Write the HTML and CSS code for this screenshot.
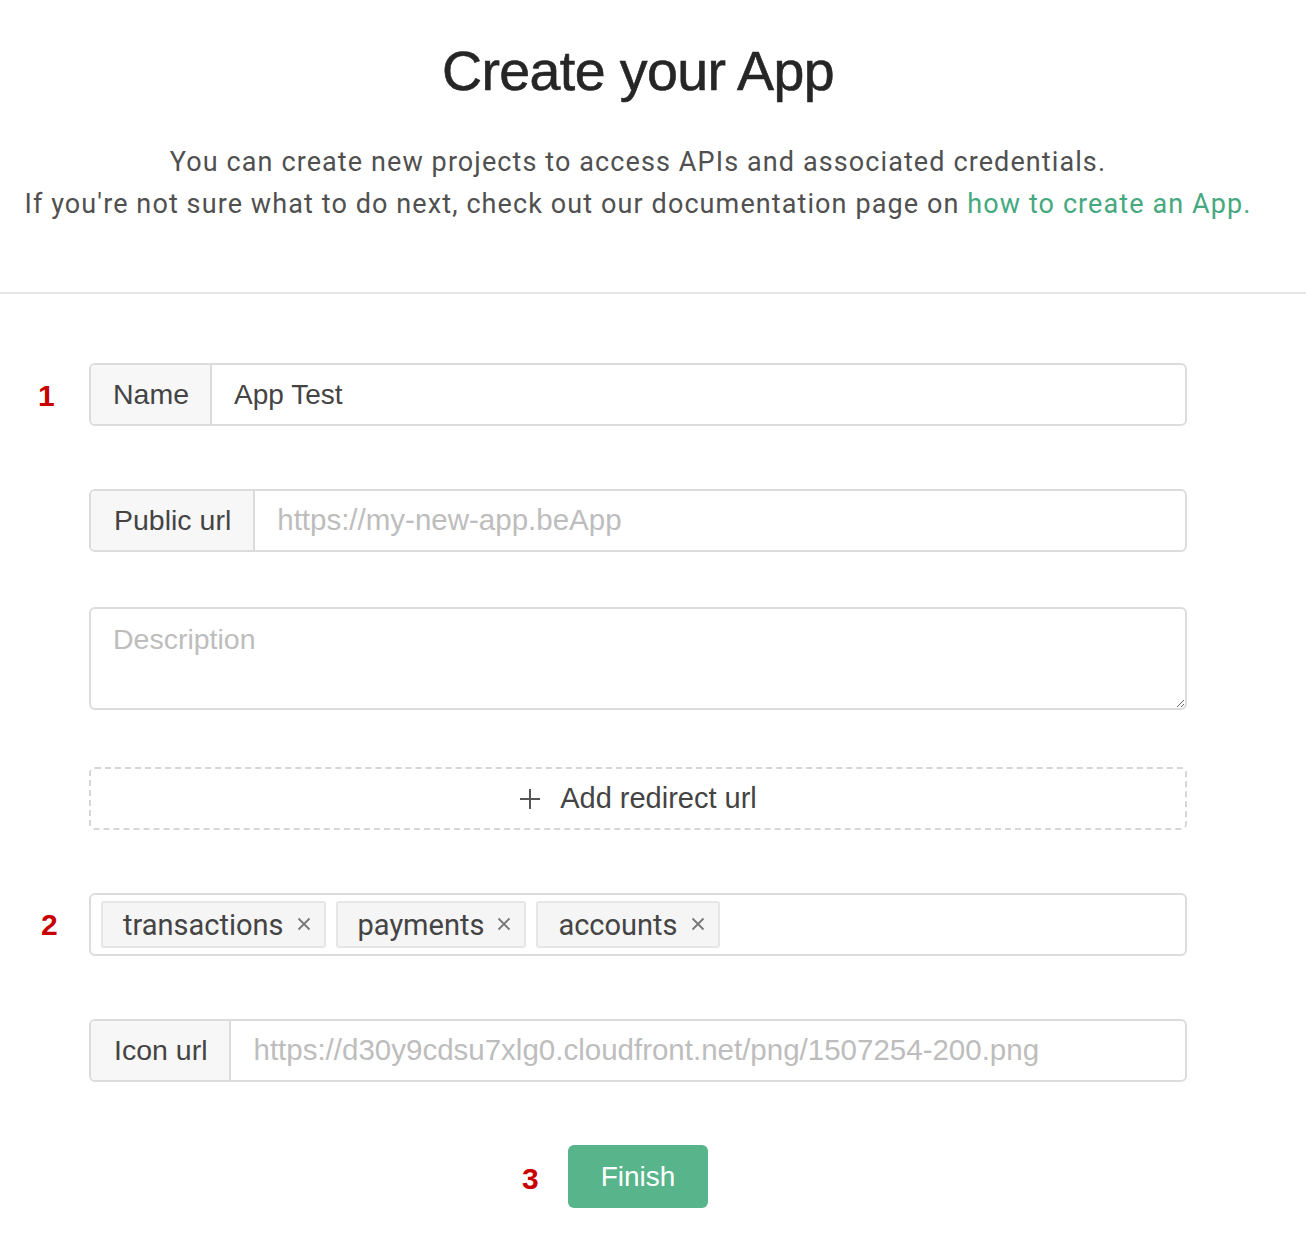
FILE: index.html
```html
<!DOCTYPE html>
<html lang="en">
<head>
<meta charset="utf-8">
<title>Create your App</title>
<link rel="stylesheet" href="styles.css">
</head>
<body>
<div class="page">
  <header class="intro">
    <h1 class="title">Create your App</h1>
    <p class="lead">You can create new projects to access APIs and associated credentials.<br>If you're not sure what to do next, check out our documentation page on <a class="link" href="#">how to create an App.</a></p>
  </header>
  <div class="divider"></div>
  <form class="form">
    <div class="row">
      <span class="step step-1">1</span>
      <div class="group">
        <span class="addon">Name</span>
        <input class="field" type="text" value="App Test">
      </div>
    </div>
    <div class="row">
      <div class="group">
        <span class="addon addon-wide">Public url</span>
        <input class="field" type="text" placeholder="https://my-new-app.beApp">
      </div>
    </div>
    <div class="row row-desc">
      <textarea class="area" placeholder="Description"></textarea>
    </div>
    <div class="row row-add">
      <button type="button" class="add">
        <svg class="plus" width="22" height="22" viewBox="0 0 22 22"><path d="M11 1v20M1 11h20" stroke="#555" stroke-width="2" fill="none"/></svg>
        <span>Add redirect url</span>
      </button>
    </div>
    <div class="row">
      <span class="step step-2">2</span>
      <div class="group tags">
        <span class="tag">transactions<svg class="x" width="14" height="14" viewBox="0 0 14 14"><path d="M1.5 1.5l11 11M12.5 1.5l-11 11" stroke="#777" stroke-width="1.8" fill="none"/></svg></span>
        <span class="tag">payments<svg class="x" width="14" height="14" viewBox="0 0 14 14"><path d="M1.5 1.5l11 11M12.5 1.5l-11 11" stroke="#777" stroke-width="1.8" fill="none"/></svg></span>
        <span class="tag">accounts<svg class="x" width="14" height="14" viewBox="0 0 14 14"><path d="M1.5 1.5l11 11M12.5 1.5l-11 11" stroke="#777" stroke-width="1.8" fill="none"/></svg></span>
      </div>
    </div>
    <div class="row">
      <div class="group">
        <span class="addon addon-wide">Icon url</span>
        <input class="field" type="text" placeholder="https://d30y9cdsu7xlg0.cloudfront.net/png/1507254-200.png">
      </div>
    </div>
    <div class="row row-submit">
      <div class="submit">
        <span class="step step-3">3</span>
        <button type="button" class="finish">Finish</button>
      </div>
    </div>
  </form>
</div>
</body>
</html>
```

FILE: styles.css
```css
* { box-sizing: border-box; }
html, body { margin: 0; padding: 0; background: #fff; }
body { font-family: "Liberation Sans", Arial, sans-serif; color: #333; }

.page { width: 1306px; }

.intro {
  width: 1276px;
  text-align: center;
  padding-top: 38px;
  height: 292px;
}
.title {
  margin: 0;
  font-family: "Liberation Sans", Arial, sans-serif;
  font-size: 55.5px;
  font-weight: 400;
  line-height: 66px;
  color: #262626;
  letter-spacing: -0.6px;
  -webkit-text-stroke: 0.6px #262626;
}
.lead {
  margin: 37px 0 0;
  font-family: Roboto, "Liberation Sans", sans-serif;
  font-size: 27px;
  font-weight: 400;
  letter-spacing: 1.1px;
  line-height: 42px;
  color: #505050;
}
.link { color: #45a87e; text-decoration: none; }

.divider { height: 2px; background: #e5e5e5; width: 1306px; }

.form {
  width: 1098px;
  margin: 69px 0 0 89px;
  display: flex;
  flex-direction: column;
  gap: 63px;
}
.row { position: relative; }
.row-desc { margin-top: -8px; }
.row-add { margin-top: -6px; }

.step {
  position: absolute;
  font-family: "Liberation Sans", Arial, sans-serif;
  font-weight: 700;
  font-size: 30px;
  color: #c80000;
  line-height: 1;
}
.step-1 { left: -51px; top: 18px; }
.step-2 { left: -48px; top: 17px; }
.step-3 { left: -46px; top: 19px; }

.group {
  display: flex;
  height: 63px;
  border: 2px solid #dcdcdc;
  border-radius: 6px;
  overflow: hidden;
  background: #fff;
}
.addon {
  display: flex;
  align-items: center;
  padding: 0 21px 0 22px;
  background: #f7f7f7;
  border-right: 2px solid #dcdcdc;
  font-size: 28.5px;
  color: #444;
  white-space: nowrap;
}
.addon-wide { padding: 0 22px 0 23px; }
.field {
  flex: 1;
  border: 0;
  outline: none;
  padding: 0 22px;
  font-family: "Liberation Sans", Arial, sans-serif;
  font-size: 28px;
  color: #444;
  background: transparent;
}
.field::placeholder { color: #bdbdbd; font-size: 29.5px; }

.area {
  display: block;
  width: 100%;
  height: 103px;
  border: 2px solid #dcdcdc;
  border-radius: 6px;
  padding: 14px 22px;
  font-family: "Liberation Sans", Arial, sans-serif;
  font-size: 28.5px;
  resize: vertical;
  outline: none;
}
.area::placeholder { color: #bdbdbd; }

.add {
  width: 100%;
  height: 63px;
  border: 2px dashed #d6d6d6;
  border-radius: 6px;
  background: #fff;
  display: flex;
  align-items: center;
  justify-content: center;
  gap: 19px;
  font-family: "Liberation Sans", Arial, sans-serif;
  font-size: 29px;
  color: #444;
  padding: 0;
}

.tags {
  align-items: center;
  gap: 10px;
  padding: 0 10px;
}
.tag {
  display: flex;
  align-items: center;
  height: 47px;
  padding: 0 13px 0 20px;
  background: #f5f5f5;
  border: 2px solid #e6e6e6;
  border-radius: 3px;
  font-family: Roboto, sans-serif;
  font-size: 29px;
  color: #444;
}
.x {
  margin-left: 13px;
  margin-top: -2px;
}

.submit {
  display: flex;
  justify-content: center;
  position: relative;
  width: 140px;
  margin-left: 479px;
}
.finish {
  width: 140px;
  height: 63px;
  border: 0;
  border-radius: 6px;
  background: #58b48b;
  color: #fff;
  font-family: "Liberation Sans", Arial, sans-serif;
  font-size: 28px;
  padding: 0;
}
```
